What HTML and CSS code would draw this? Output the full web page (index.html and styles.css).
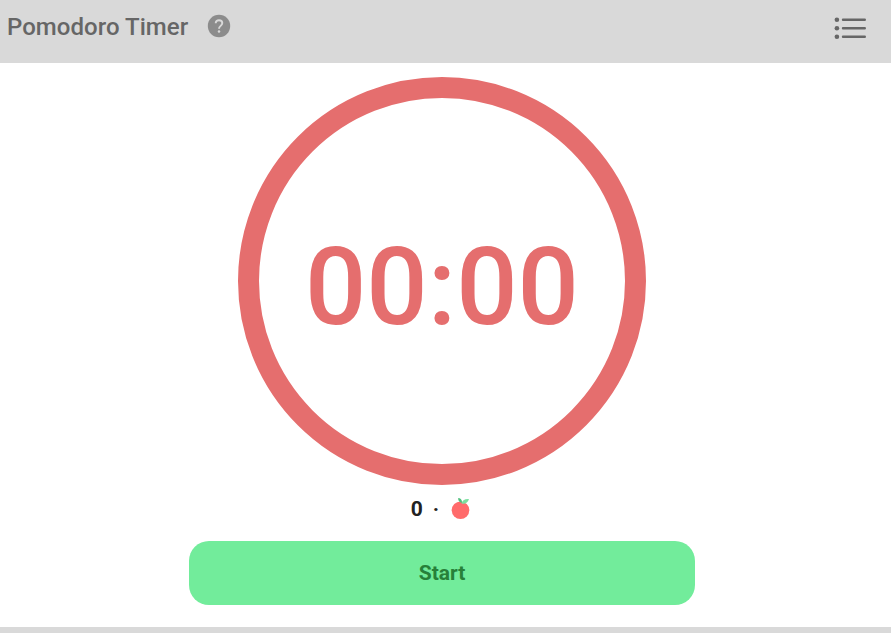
FILE: index.html
```html
<!DOCTYPE html>
<html lang="en">
<head>
<meta charset="utf-8">
<title>Pomodoro Timer</title>
<link rel="stylesheet" href="styles.css">
</head>
<body>
<header class="bar">
  <h1 class="title">Pomodoro Timer</h1>
  <svg class="help" viewBox="0 0 24 24"><circle cx="12" cy="12" r="11.200" fill="#8c8c8c"/><path d="M8.700 9.300C8.700 7.400 10 6.200 12 6.200s3.300 1.200 3.300 2.900c0 2.700-3.300 2.900-3.300 5.600" fill="none" stroke="#d9d9d9" stroke-width="1.900"/><circle cx="12" cy="17.500" r="1.250" fill="#d9d9d9"/></svg>
  <svg class="list" viewBox="0 0 32 24" fill="#666"><circle cx="2.900" cy="3.700" r="2.300"/><circle cx="2.900" cy="12.200" r="2.300"/><circle cx="2.900" cy="20.700" r="2.300"/><path d="M9 3.700h21.800M9 12.200h21.800M9 20.700h21.800" stroke="#666" stroke-width="2.400" stroke-linecap="round"/></svg>
</header>
<main class="main">
  <div class="ring"><span class="time">00:00</span></div>
  <div class="count"><span>0</span><span class="dot">·</span>
    <svg class="fruit" viewBox="0 0 20 23"><circle cx="9.500" cy="13.300" r="8.800" fill="#ff6b6b"/><path d="M10.500 6C8 5 7 3 7.200 1c2 0 3.700 1.500 3.800 4z" fill="#4fc07c"/><path d="M10.500 6.500c.5-3 3.500-5 7.500-4.500-1 3.500-4 5.500-7.500 4.500z" fill="#7be0a0"/></svg>
  </div>
  <button class="start">Start</button>
</main>
<footer class="foot"></footer>
</body>
</html>
```

FILE: styles.css
```css
* { box-sizing: border-box; }
body { margin: 0; height: 633px; display: flex; flex-direction: column; overflow: hidden; background: #fff; font-family: Roboto, sans-serif; }
.bar { height: 63px; flex: none; display: flex; align-items: flex-start; background: #d9d9d9; padding: 12px 25px 0 7px; }
.title { margin: 0; font-size: 24px; line-height: 30px; font-weight: 500; letter-spacing: 0.04px; color: #666; }
.help { width: 24px; height: 24px; margin: 2px 0 0 19px; }
.list { width: 32px; height: 24px; margin: 4px 0 0 auto; }
.main { flex: 1; display: flex; flex-direction: column; align-items: center; padding: 14px 7px 0 0; }
.ring { flex: none; width: 408px; height: 408px; border: 21px solid #e56e6e; border-radius: 50%; display: flex; align-items: center; justify-content: center; }
.time { font-size: 108px; line-height: 110px; font-weight: 500; color: #e56e6e; padding: 12px 0 0; }
.count { height: 56px; flex: none; display: flex; align-items: center; font-size: 21px; font-weight: 700; color: #222; padding: 0 2px 8px 0; }
.dot { margin: 0 12px 0 10px; }
.fruit { width: 20px; height: 23px; margin-bottom: 2px; }
.start { width: 506px; height: 64px; flex: none; border: 0; border-radius: 20px; background: #72ec9b; color: #278039; font: 700 21px Roboto, sans-serif; }
.foot { height: 6px; flex: none; background: #d9d9d9; }
```
